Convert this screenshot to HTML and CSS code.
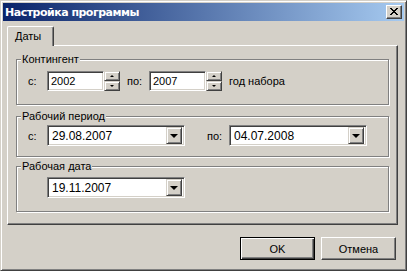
FILE: index.html
```html
<!DOCTYPE html>
<html lang="ru">
<head>
<meta charset="UTF-8">
<title>Настройка программы</title>
<link rel="stylesheet" href="styles.css">
</head>
<body>

<div class="window">
  <div class="titlebar">
    <span class="title">Настройка программы</span>
    <span class="close">
      <svg width="8" height="7" viewBox="0 0 8 7" shape-rendering="crispEdges">
        <path d="M0 0h2v1h-2zM6 0h2v1h-2zM1 1h2v1h-2zM5 1h2v1h-2zM2 2h4v1h-4zM3 3h2v1h-2zM2 4h4v1h-4zM1 5h2v1h-2zM5 5h2v1h-2zM0 6h2v1h-2zM6 6h2v1h-2z" fill="#000"/>
      </svg>
    </span>
  </div>

  <div class="client">
    <div class="tabs">
      <div class="tab">Даты</div>
    </div>

    <div class="panel">
      <fieldset class="group g1">
        <legend>Контингент</legend>
        <div class="row">
          <span class="lbl lbl-from">с:</span>
          <div class="spin">
            <div class="field spin-field">2002</div>
            <div class="spin-btns">
              <span class="spin-btn"><i class="arr-up"></i></span>
              <span class="spin-btn"><i class="arr-down"></i></span>
            </div>
          </div>
          <span class="lbl lbl-to">по:</span>
          <div class="spin">
            <div class="field spin-field">2007</div>
            <div class="spin-btns">
              <span class="spin-btn"><i class="arr-up"></i></span>
              <span class="spin-btn"><i class="arr-down"></i></span>
            </div>
          </div>
          <span class="note">год набора</span>
        </div>
      </fieldset>

      <fieldset class="group g2">
        <legend>Рабочий период</legend>
        <div class="row">
          <span class="lbl lbl-from">с:</span>
          <div class="field combo">
            <span class="combo-text">29.08.2007</span>
            <span class="drop"><i class="arr-drop"></i></span>
          </div>
          <span class="lbl lbl-to wide">по:</span>
          <div class="field combo">
            <span class="combo-text">04.07.2008</span>
            <span class="drop"><i class="arr-drop"></i></span>
          </div>
        </div>
      </fieldset>

      <fieldset class="group g3">
        <legend>Рабочая дата</legend>
        <div class="row">
          <span class="lbl lbl-from"></span>
          <div class="field combo">
            <span class="combo-text">19.11.2007</span>
            <span class="drop"><i class="arr-drop"></i></span>
          </div>
        </div>
      </fieldset>
    </div>

    <div class="buttons">
      <button class="btn default">OK</button>
      <button class="btn">Отмена</button>
    </div>
  </div>
</div>

</body>
</html>
```

FILE: styles.css
```css
body {
  margin: 0;
  font-family: "Liberation Sans", Arial, sans-serif;
  font-size: 11px;
  color: #000;
  background: #d4d0c8;
}

.window {
  width: 407px;
  height: 271px;
  box-sizing: border-box;
  background: #d4d0c8;
  border: 1px solid;
  border-color: #d4d0c8 #404040 #404040 #d4d0c8;
  box-shadow: inset 1px 1px #fff, inset -1px -1px #808080;
  padding: 2px;
}

.titlebar {
  height: 18px;
  display: flex;
  align-items: center;
  justify-content: space-between;
  padding: 0 2px;
  background: linear-gradient(to right, #0a246a, #a6caf0);
}

.title {
  font-family: "DejaVu Sans", sans-serif;
  font-weight: bold;
  font-size: 11px;
  color: #fff;
  letter-spacing: -0.5px;
}

.close {
  width: 16px;
  height: 14px;
  box-sizing: border-box;
  display: flex;
  align-items: center;
  justify-content: center;
  background: #d4d0c8;
  border: 1px solid;
  border-color: #fff #404040 #404040 #fff;
  box-shadow: inset -1px -1px #808080;
  padding: 0 1px 1px 0;
}

.client {
  padding: 5px 6px 0 4px;
}

.tabs {
  display: flex;
}

.tab {
  position: relative;
  z-index: 1;
  width: 47px;
  height: 20px;
  box-sizing: border-box;
  margin-bottom: -1px;
  padding: 3px 0 0 7px;
  background: #d4d0c8;
  border: 1px solid;
  border-color: #fff #404040 transparent #fff;
  border-bottom: none;
  border-radius: 2px 2px 0 0;
  box-shadow: inset -1px 0 #808080;
}

.panel {
  height: 180px;
  box-sizing: border-box;
  border: 1px solid;
  border-color: #fff #404040 #404040 #fff;
  box-shadow: inset -1px -1px #808080;
  padding-top: 7px;
}

.group {
  margin: 0 8px;
  padding: 0;
  border: 1px solid #808080;
  box-shadow: inset 1px 1px #fff, 1px 1px #fff;
}

.group legend {
  margin-left: 4px;
  padding: 0 1px;
  line-height: 13px;
  background: #d4d0c8;
}

.g1 {
  padding: 5px 0 13px;
}

.g2 {
  margin-top: 5px;
  padding: 2px 0 10px;
}

.g3 {
  margin-top: 3px;
  padding: 4px 0 13px;
}

.row {
  display: flex;
  align-items: center;
  padding-left: 11px;
}

.lbl-from {
  width: 19px;
}

.lbl-to {
  width: 22px;
  margin-left: 7px;
}

.lbl-to.wide {
  margin-left: 22px;
}

.note {
  margin-left: 7px;
}

.field {
  box-sizing: border-box;
  background: #fff;
  border: 1px solid;
  border-color: #808080 #fff #fff #808080;
  box-shadow: inset 1px 1px #404040, inset -1px -1px #d4d0c8;
}

.spin {
  display: flex;
}

.spin-field {
  width: 57px;
  height: 20px;
  padding: 3px 0 0 3px;
}

.spin-btns {
  display: flex;
  flex-direction: column;
}

.spin-btn,
.drop {
  box-sizing: border-box;
  display: flex;
  align-items: center;
  justify-content: center;
  background: #d4d0c8;
  border: 1px solid;
  border-color: #d4d0c8 #404040 #404040 #d4d0c8;
  box-shadow: inset 1px 1px #fff, inset -1px -1px #808080;
}

.spin-btn {
  width: 16px;
  height: 10px;
}

.arr-up,
.arr-down {
  width: 0;
  height: 0;
  border-left: 2px solid transparent;
  border-right: 2px solid transparent;
}

.arr-up {
  border-bottom: 2px solid #000;
}

.arr-down {
  border-top: 2px solid #000;
}

.combo {
  width: 138px;
  height: 21px;
  display: flex;
  align-items: center;
  justify-content: space-between;
  padding: 2px;
}

.combo-text {
  padding-left: 2px;
  font-size: 12px;
}

.drop {
  width: 16px;
  height: 17px;
}

.arr-drop {
  width: 0;
  height: 0;
  border-left: 4px solid transparent;
  border-right: 4px solid transparent;
  border-top: 4px solid #000;
}

.buttons {
  display: flex;
  justify-content: flex-end;
  gap: 6px;
  margin-top: 12px;
  padding-right: 2px;
}

.btn {
  width: 75px;
  height: 23px;
  box-sizing: border-box;
  font-family: "Liberation Sans", Arial, sans-serif;
  font-size: 11px;
  color: #000;
  background: #d4d0c8;
  border: 1px solid;
  border-color: #fff #404040 #404040 #fff;
  box-shadow: inset -1px -1px #808080;
  padding: 0;
}

.btn.default {
  border: 1px solid #000;
  box-shadow: inset 1px 1px #fff, inset -1px -1px #404040, inset -2px -2px #808080;
}
```
